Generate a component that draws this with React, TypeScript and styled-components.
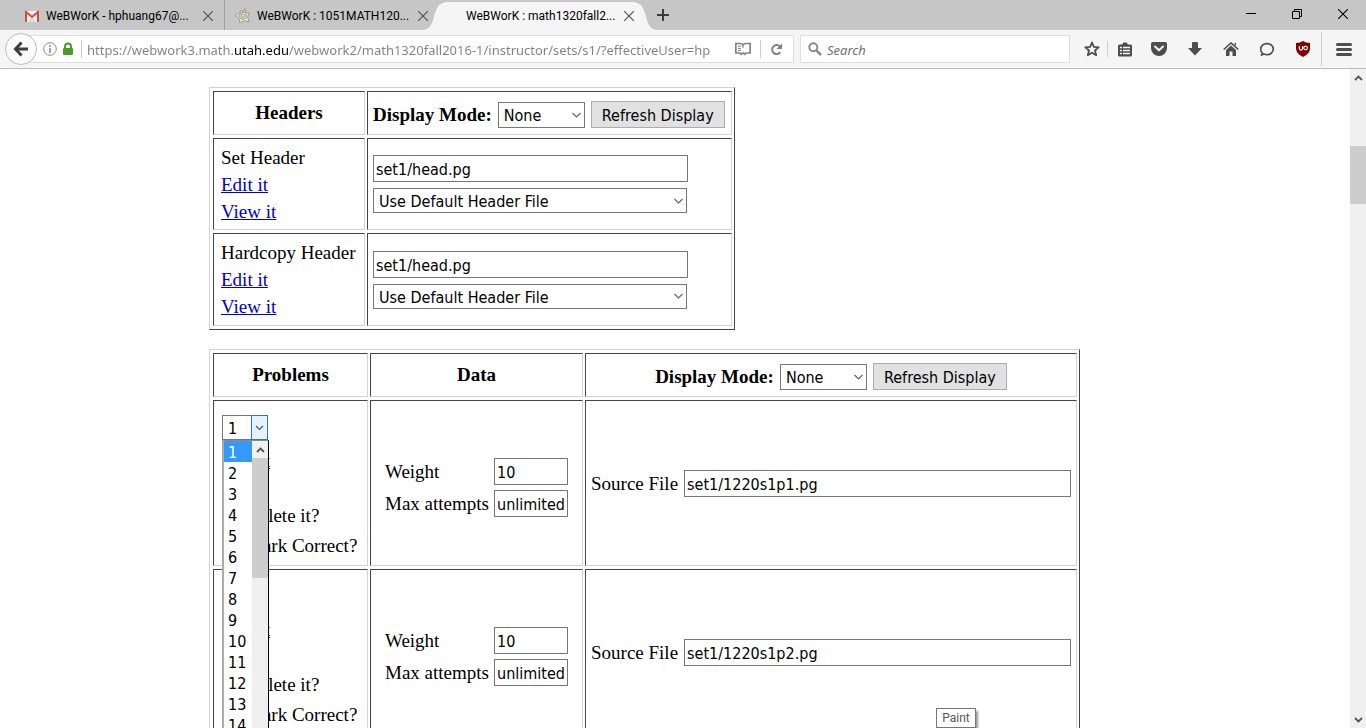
import React from "react";
import styled, { createGlobalStyle } from "styled-components";

const ui = `"Noto Sans", "Open Sans", sans-serif`;
const tabFont = `Roboto, "Open Sans", sans-serif`;
const control = `"DejaVu Sans Condensed", "DejaVu Sans", sans-serif`;
const serif = `"Liberation Serif", "Times New Roman", serif`;

const GlobalStyle = createGlobalStyle`
  *, *::before, *::after { box-sizing: border-box; }
  body { margin: 0; background: #fff; overflow: hidden; }
  svg { display: block; flex: none; }
`;

const Browser = styled.div`
  display: flex;
  flex-direction: column;
  height: 100vh;
  color: #000;
`;

/* ---------- window chrome ---------- */

const TitleBar = styled.header`
  display: flex;
  flex: none;
  height: 30px;
  padding-left: 12px;
  background: #c6c6c6;
  font: 12px/28px ${tabFont};
`;

const Tab = styled.div<{ $active?: boolean }>`
  position: relative;
  display: flex;
  align-items: center;
  gap: 6px;
  width: ${(p) => (p.$active ? 212 : 213)}px;
  padding: 2px ${(p) => (p.$active ? 10 : 8)}px 0 12px;
  border-right: ${(p) => (p.$active ? "0" : "1px solid #9f9f9f")};
  &:nth-of-type(2) { width: 209px; padding-left: 9px; border-right: 0; }
`;

const TabShape = styled.svg`
  position: absolute;
  left: -11px;
  top: 0;
`;

const TabTitle = styled.span`
  position: relative;
  flex: 1;
  white-space: nowrap;
`;

const IconButton = styled.button<{ $w?: number }>`
  position: relative;
  display: flex;
  flex: none;
  align-items: center;
  justify-content: center;
  width: ${(p) => p.$w ?? 36}px;
  height: 100%;
  padding: 0;
  border: 0;
  background: none;
  color: #4d4d4d;
`;

const WindowButtons = styled.div`
  display: flex;
  height: 28px;
  margin-left: auto;
`;

const Toolbar = styled.nav`
  display: flex;
  flex: none;
  align-items: center;
  height: 39px;
  padding-left: 5px;
  background: #f5f5f5;
  border-bottom: 1px solid #bcbcbc;
`;

const BackButton = styled.button`
  z-index: 1;
  display: flex;
  flex: none;
  align-items: center;
  justify-content: center;
  width: 32px;
  height: 32px;
  padding: 0;
  border: 1px solid #bdbdbd;
  border-radius: 50%;
  background: #fbfbfb;
`;

const Field = styled.div`
  display: flex;
  align-items: center;
  min-width: 0;
  height: 28px;
  border: 1px solid #dfdfdf;
  background: #fff;
`;

const UrlField = styled(Field)`
  flex: 773 1 773px;
  margin-left: -16px;
  padding: 0 7px 0 21px;
  gap: 5px;
`;

const Identity = styled.div`
  display: flex;
  align-items: center;
  gap: 5px;
  padding-right: 2px;
`;

const SearchField = styled(Field)`
  flex: 270 1 270px;
  margin: 0 6px;
  padding-left: 7px;
  gap: 5px;
`;

const Divider = styled.span<{ $h: number }>`
  flex: none;
  width: 1px;
  height: ${(p) => p.$h}px;
  background: #cdcdcd;
`;

const UrlInput = styled.input`
  flex: 1;
  min-width: 0;
  height: 26px;
  margin-right: 15px;
  padding: 2px 0 0;
  border: 0;
  outline: 0;
  font: 13px ${ui};
  color: transparent;
  background: linear-gradient(90deg, #808080 147px, #000 147px, #000 202px, #808080 202px);
  background-clip: text;
  -webkit-background-clip: text;
`;

const SearchInput = styled.input`
  flex: 1;
  min-width: 0;
  padding: 2px 0 0;
  border: 0;
  outline: 0;
  background: none;
  font: italic 13px ${ui};
  &::placeholder { color: #707070; opacity: 1; }
`;

/* ---------- page ---------- */

const Viewport = styled.div`
  position: relative;
  display: flex;
  flex: 1;
  min-height: 0;
  overflow: hidden;
`;

const Page = styled.main`
  flex: 1;
  min-width: 0;
  overflow: hidden;
  padding: 18px 0 0 209px;
  font: 19px/27px ${serif};
`;

const GridTable = styled.table`
  margin-bottom: 19px;
  padding-left: 1px;
  border: 1px solid;
  border-color: #d3d3d3 #454545 #454545 #d3d3d3;
  border-collapse: separate;
  border-spacing: 2px 3px;
  table-layout: fixed;
  color: #000;
  font: 19px/27px ${serif};
`;

const HeadersTable = styled(GridTable)`
  width: 526px;
`;

const ProblemsTable = styled(GridTable)`
  width: 871px;
`;

const cellBorder = `
  border: 1px solid;
  border-color: #454545 #d3d3d3 #d3d3d3 #454545;
`;

const HeadCell = styled.th<{ $w: number }>`
  ${cellBorder}
  width: ${(p) => p.$w}px;
  height: 44px;
  padding: 0 0 2px;
  font-weight: bold;
`;

const Cell = styled.td<{ $h?: number }>`
  ${cellBorder}
  height: ${(p) => (p.$h ? `${p.$h}px` : "auto")};
  padding: 0 5px;
`;

const LabelCell = styled(Cell)`
  padding: 0 0 0 7px;
`;

const ProblemCell = styled(Cell)`
  padding: 14px 0 5px 8px;
  vertical-align: top;
`;

const Stack = styled.div<{ $gap?: number }>`
  display: flex;
  flex-direction: column;
  align-items: flex-start;
  gap: ${(p) => p.$gap ?? 0}px;
`;

const DisplayForm = styled.div<{ $center?: boolean }>`
  display: flex;
  align-items: center;
  justify-content: ${(p) => (p.$center ? "center" : "flex-start")};
  gap: 6px;
  padding: 5px 5px 0;
  white-space: nowrap;
`;

const Link = styled.a`
  color: #0000c8;
`;

const ProblemLink = styled(Link)`
  line-height: 26px;
`;

const TextInput = styled.input<{ $w: number }>`
  width: ${(p) => p.$w}px;
  height: 27px;
  padding: 2px 2px 0;
  border: 1px solid #777;
  background: #fff;
  color: #000;
  font: 16px ${control};
`;

const SelectWrap = styled.span<{ $w: number }>`
  position: relative;
  display: inline-flex;
  align-items: center;
  width: ${(p) => p.$w}px;
`;

const SelectBox = styled.select<{ $h?: number }>`
  width: 100%;
  height: ${(p) => p.$h ?? 25}px;
  padding: 2px 5px 0;
  border: 1px solid #777;
  border-radius: 0;
  appearance: none;
  background: #fff;
  color: #000;
  font: 16px ${control};
`;

const Arrow = styled.svg<{ $right?: number }>`
  position: absolute;
  right: ${(p) => p.$right ?? 4}px;
  pointer-events: none;
`;

const ArrowBox = styled.span`
  position: absolute;
  right: 0;
  display: flex;
  align-items: center;
  justify-content: center;
  width: 17px;
  height: 25px;
  border: 1px solid #2a7ab0;
  background: #e5f1fb;
  pointer-events: none;
`;

const RefreshButton = styled.button`
  width: 134px;
  height: 27px;
  padding: 1px 0 0;
  border: 1px solid #adadad;
  background: #e1e1e1;
  color: #000;
  font: 16px ${control};
`;

const Popup = styled.div`
  position: absolute;
  z-index: 2;
  top: 25px;
  left: 0;
  display: flex;
  width: 47px;
  height: 640px;
  border: solid;
  border-width: 1px 1px 1px 2px;
  border-color: #8a8a8a #000 #000 #aaa;
  background: #fff;
`;

const Options = styled.ul`
  flex: 1;
  margin: 0;
  padding: 0;
  list-style: none;
  font: 16px/19px ${control};
`;

const Option = styled.li<{ $on: boolean }>`
  padding: 2px 0 0 4px;
  background: ${(p) => (p.$on ? "#3399ff" : "#fff")};
  color: ${(p) => (p.$on ? "#fff" : "#000")};
`;

const Track = styled.div<{ $w: number }>`
  display: flex;
  flex: none;
  flex-direction: column;
  align-items: center;
  width: ${(p) => p.$w}px;
  background: #f0f0f0;
`;

const Thumb = styled.div<{ $h: number }>`
  flex: none;
  width: 100%;
  height: ${(p) => p.$h}px;
  background: #cdcdcd;
`;

const ArrowSlot = styled.span<{ $h: number }>`
  display: flex;
  flex: none;
  align-items: center;
  height: ${(p) => p.$h}px;
`;

const PageTrack = styled(Track)`
  ${ArrowSlot}:first-child { margin-bottom: 60px; }
  ${ArrowSlot}:last-child { margin-top: auto; }
`;

const Links = styled.div`
  display: flex;
  flex-direction: column;
  align-items: flex-start;
  padding: 8px 0 0 1px;
`;

const CheckLabel = styled.label`
  display: flex;
  align-items: center;
  gap: 6px;
  height: 30px;
  input { width: 13px; height: 13px; margin: 0 0 0 5px; }
`;

const DataGrid = styled.div`
  display: grid;
  grid-template-columns: 104px 74px;
  gap: 5px;
  align-items: center;
  padding: 8px 0 0 9px;
  white-space: nowrap;
`;

const SourceRow = styled.label`
  display: flex;
  align-items: center;
  gap: 6px;
  white-space: nowrap;
`;

const Tooltip = styled.div`
  position: absolute;
  left: 936px;
  bottom: 0;
  width: 40px;
  height: 20px;
  border: 1px solid #767676;
  background: #fff;
  box-shadow: 2px 3px 2px #999;
  color: #575757;
  font: 12px/18px ${tabFont};
  text-align: center;
`;

/* ---------- icons ---------- */

const Cross = ({ size = 10, color = "#4d4d4d" }) => (
  <svg width={size} height={size} viewBox="0 0 10 10" stroke={color} strokeWidth="1.1">
    <path d="M0 0 10 10M10 0 0 10" />
  </svg>
);

const Chevron = ({ up = false, bold = false }) => (
  <svg width="9" height="6" viewBox="0 0 9 6" fill="none" stroke="#555" strokeWidth={bold ? 1.8 : 1.2}>
    <path d={up ? "M1 5 4.5 1.500 8 5" : "M1 1 4.5 4.500 8 1"} />
  </svg>
);

const GmailIcon = () => (
  <svg width="16" height="16" viewBox="0 0 16 16">
    <path d="M1 3h14v11H1z" fill="#f2f2f2" />
    <path d="M3.5 14 8 8.5 12.5 14z" fill="#dcdcdc" />
    <path d="M1 14V3.6Q1 2.6 2 2.6L8 7.8l6-5.2q1 0 1 1V14h-2V6L8 10.2 3 6v8z" fill="#d54b3d" />
  </svg>
);

const WebIcon = () => (
  <svg width="17" height="16" viewBox="0 0 16 16" fill="none" stroke="#96967e" strokeWidth=".9">
    <path d="M10.500.8 11 4.600 15 5 13 9l1.800 5-5-1.500-4.500 2.300-.6-4.300L.8 7.500 5 5.300 6.500 2l2 2z" fill="#e8e6d2" />
    <path d="M9.700 4 12 6.200 11 10.400 7 11.300 4.600 8 6.300 5zM9 6l1.400 1.500L9 9.400 7 9l-.5-2z" />
  </svg>
);

const Back = () => (
  <svg width="16" height="16" viewBox="0 0 16 16" fill="none" stroke="#3f3f3f" strokeWidth="3">
    <path d="M8.5 1.5 2.5 8l6 6.5M3 8h12" />
  </svg>
);

const Info = () => (
  <svg width="14" height="14" viewBox="0 0 14 14" fill="none" stroke="#8a8a8a">
    <circle cx="7" cy="7" r="6.3" />
    <path d="M7 6v5M7 3v2" strokeWidth="1.6" />
  </svg>
);

const Lock = () => (
  <svg width="12" height="14" viewBox="0 0 12 14">
    <path d="M3 7V4.5a3 3 0 0 1 6 0V7" fill="none" stroke="#4d9a26" strokeWidth="2" />
    <rect x="1" y="6" width="10" height="7" rx="1" fill="#4d9a26" />
  </svg>
);

const Reader = () => (
  <svg width="16" height="14" viewBox="0 0 16 14" fill="none" stroke="#808080" strokeWidth="1.700">
    <path d="M8 3Q6.800 1.500 5.500 1.500H.8v9.500h4.200Q5.500 11 6 12.300L8 11l2 1.300Q10.500 11 11 11h4.200V1.500h-4.700Q9.200 1.500 8 3z" />
    <path d="M3 4.200h3M3 6.400h3M3 8.600h3M8 3v3" strokeWidth="1" />
  </svg>
);

const Reload = () => (
  <svg width="13" height="13" viewBox="0 0 13 13">
    <path d="M10.300 9.200A4.500 4.500 0 1 1 9.800 3.400" fill="none" stroke="#808080" strokeWidth="2" />
    <path d="M12 .5V6H6.500z" fill="#808080" />
  </svg>
);

const Magnifier = () => (
  <svg width="14" height="14" viewBox="0 0 14 14" fill="none" stroke="#8c8c8c">
    <circle cx="5.300" cy="5.300" r="4" strokeWidth="2" />
    <path d="M8.300 8.300 13 13" strokeWidth="2.600" />
  </svg>
);

const Star = () => (
  <svg width="16" height="16" viewBox="0 0 16 16" fill="none" stroke="#4d4d4d" strokeWidth="1.800" strokeLinejoin="round">
    <path d="M8 1.500 9.900 5.900l4.800.4-3.700 3.200 1.200 4.800L8 11.700l-4.200 2.600L5 9.500 1.300 6.300l4.800-.4z" />
  </svg>
);

const ListIcon = () => (
  <svg width="14" height="15" viewBox="0 0 14 15">
    <path d="M1.500 2.500H4L5.500.5h3l1.500 2h2.500q1.500 0 1.500 1.500v9q0 1.500-1.500 1.500h-11Q0 14.500 0 13V4q0-1.500 1.500-1.500z" fill="#4d4d4d" />
    <path d="M2 5.500h2M5 5.500h7M2 8.500h2M5 8.500h7M2 11.500h2M5 11.500h7" stroke="#f5f5f5" strokeWidth="1.600" />
  </svg>
);

const Pocket = () => (
  <svg width="16" height="14" viewBox="0 0 16 14">
    <path d="M1.500 0h13Q16 0 16 1.500V6A8 8 0 0 1 0 6V1.500Q0 0 1.500 0z" fill="#4d4d4d" />
    <path d="M4 4.500 8 8.300l4-3.800" fill="none" stroke="#f5f5f5" strokeWidth="2" strokeLinecap="round" strokeLinejoin="round" />
  </svg>
);

const Download = () => (
  <svg width="14" height="14" viewBox="0 0 14 14" fill="#4d4d4d">
    <path d="M5 0h4q1 0 1 1v5h4L7 13.500 0 6h4V1q0-1 1-1z" />
  </svg>
);

const Home = () => (
  <svg width="16" height="14" viewBox="0 0 16 14">
    <path d="M.7 7.500 8 1l7.300 6.500" fill="none" stroke="#4d4d4d" strokeWidth="1.600" />
    <path d="M11.500 1H13v3l-1.500-1.300zM8 3.500l5 4.500v6H9.500V9.500h-3V14H3V8z" fill="#4d4d4d" />
  </svg>
);

const Chat = () => (
  <svg width="16" height="15" viewBox="0 0 16 15" fill="none" stroke="#4d4d4d" strokeWidth="1.600">
    <path d="M1.800 13.200c1-.3 1.500-.9 1.600-1.900C2.300 10.200 1.700 8.800 1.700 7.200 1.700 4 4.500 1.600 8 1.600s6.300 2.400 6.300 5.500-2.800 5.600-6.300 5.600c-1.200 0-2.200-.3-3.100-.7-.8.7-1.800 1.200-3.100 1.200z" />
  </svg>
);

const Shield = () => (
  <svg width="14" height="16" viewBox="0 0 14 16">
    <path d="M7 0q3 2 7 2v5.500q0 5-7 8.500-7-3.500-7-8.500V2q4 0 7-2z" fill="#800000" />
    <path d="M3.300 5v2.500a1.600 1.600 0 0 0 3.200 0V5M9 5.300a1.800 1.800 0 1 1 0 3.400 1.800 1.800 0 0 1 0-3.400z" fill="none" stroke="#fff" strokeWidth="1.100" />
  </svg>
);

const Menu = () => (
  <svg width="16" height="13" viewBox="0 0 16 13" stroke="#4d4d4d" strokeWidth="3" strokeLinecap="round">
    <path d="M1.500 1.500h13M1.500 6.500h13M1.500 11.500h13" />
  </svg>
);

/* ---------- parts ---------- */

const Select = ({ label, value, width, height }: { label: string; value: string; width: number; height?: number }) => (
  <SelectWrap $w={width}>
    <SelectBox aria-label={label} $h={height} defaultValue={value}>
      <option>{value}</option>
    </SelectBox>
    <Arrow width="9" height="6" viewBox="0 0 9 6" fill="none" stroke="#666" strokeWidth="1.200">
      <path d="M.5 1 4.500 5 8.500 1" />
    </Arrow>
  </SelectWrap>
);

const DisplayMode = ({ center }: { center?: boolean }) => (
  <DisplayForm $center={center}>
    <span>Display Mode:</span>
    <Select label="Display Mode" value="None" width={87} height={26} />
    <RefreshButton type="button">Refresh Display</RefreshButton>
  </DisplayForm>
);

const HeaderRow = ({ name, height }: { name: string; height: number }) => (
  <tr>
    <LabelCell $h={height}>
      <Stack>
        <span>{name}</span>
        <Link href="#edit">Edit it</Link>
        <Link href="#view">View it</Link>
      </Stack>
    </LabelCell>
    <Cell>
      <Stack $gap={6}>
        <TextInput aria-label={`${name} file`} $w={315} defaultValue="set1/head.pg" />
        <Select label={`${name} choice`} value="Use Default Header File" width={314} />
      </Stack>
    </Cell>
  </tr>
);

const numbers = Array.from({ length: 14 }, (_, i) => i + 1);

const NumberPopup = () => (
  <Popup>
    <Options role="listbox" aria-label="Problem number">
      {numbers.map((n) => (
        <Option key={n} role="option" aria-selected={n === 1} $on={n === 1}>
          {n}
        </Option>
      ))}
    </Options>
    <Track $w={16}>
      <ArrowSlot $h={17}>
        <Chevron up bold />
      </ArrowSlot>
      <Thumb $h={120} />
    </Track>
  </Popup>
);

const ProblemRow = ({ n, open }: { n: number; open?: boolean }) => (
  <tr>
    <ProblemCell>
      <Stack>
        <SelectWrap $w={46}>
          <SelectBox aria-label={`Problem ${n} number`} defaultValue={n}>
            <option>{n}</option>
          </SelectBox>
          <ArrowBox>
            <Chevron />
          </ArrowBox>
          {open && <NumberPopup />}
        </SelectWrap>
        <Links>
          <ProblemLink href="#edit">Edit it</ProblemLink>
          <ProblemLink href="#try">Try it</ProblemLink>
        </Links>
        <CheckLabel>
          <input type="checkbox" />
          Delete it?
        </CheckLabel>
        <CheckLabel>
          <input type="checkbox" />
          Mark Correct?
        </CheckLabel>
      </Stack>
    </ProblemCell>
    <Cell>
      <DataGrid>
        <label htmlFor={`weight${n}`}>Weight</label>
        <TextInput id={`weight${n}`} $w={74} defaultValue="10" />
        <label htmlFor={`attempts${n}`}>Max attempts</label>
        <TextInput id={`attempts${n}`} $w={74} defaultValue="unlimited" />
      </DataGrid>
    </Cell>
    <Cell>
      <SourceRow>
        Source File
        <TextInput $w={387} defaultValue={`set1/1220s1p${n}.pg`} />
      </SourceRow>
    </Cell>
  </tr>
);

export default function App() {
  return (
    <Browser>
      <GlobalStyle />
      <TitleBar>
        <Tab>
          <GmailIcon />
          <TabTitle>WeBWorK - hphuang67@...</TabTitle>
          <IconButton $w={16} aria-label="Close tab"><Cross /></IconButton>
        </Tab>
        <Tab>
          <WebIcon />
          <TabTitle>WeBWorK : 1051MATH120...</TabTitle>
          <IconButton $w={16} aria-label="Close tab"><Cross /></IconButton>
        </Tab>
        <Tab $active>
          <TabShape width="234" height="30" viewBox="0 0 234 30">
            <path d="M0 30C9 29 10 20 12 13Q15 2 24 2H210Q219 2 222 13C224 20 225 29 234 30z" fill="#f5f5f5" />
          </TabShape>
          <svg width="14" height="16" />
          <TabTitle>WeBWorK : math1320fall2...</TabTitle>
          <IconButton $w={16} aria-label="Close tab"><Cross /></IconButton>
        </Tab>
        <IconButton $w={34} aria-label="New tab">
          <svg width="12" height="12" viewBox="0 0 12 12" stroke="#3c3c3c" strokeWidth="2">
            <path d="M6 0v12M0 6h12" />
          </svg>
        </IconButton>
        <WindowButtons>
          <IconButton $w={46} aria-label="Minimize">
            <svg width="10" height="10" viewBox="0 0 10 10" stroke="#000"><path d="M0 4.500h10" /></svg>
          </IconButton>
          <IconButton $w={46} aria-label="Restore">
            <svg width="10" height="10" viewBox="0 0 10 10" fill="none" stroke="#000">
              <path d="M.5 2.500h7v7h-7zM2.500 2.500v-2h7v7h-2" />
            </svg>
          </IconButton>
          <IconButton $w={46} aria-label="Close"><Cross color="#000" /></IconButton>
        </WindowButtons>
      </TitleBar>

      <Toolbar>
        <BackButton aria-label="Back"><Back /></BackButton>
        <UrlField>
          <Identity>
            <Info />
            <Lock />
          </Identity>
          <Divider $h={18} />
          <UrlInput
            aria-label="Address"
            defaultValue="https://webwork3.math.utah.edu/webwork2/math1320fall2016-1/instructor/sets/s1/?effectiveUser=hp"
          />
          <IconButton $w={24} aria-label="Reader view"><Reader /></IconButton>
          <Divider $h={18} />
          <IconButton $w={20} aria-label="Reload"><Reload /></IconButton>
        </UrlField>
        <SearchField>
          <Magnifier />
          <SearchInput aria-label="Search" placeholder="Search" />
        </SearchField>
        <IconButton $w={31} aria-label="Bookmark"><Star /></IconButton>
        <Divider $h={16} />
        <IconButton $w={33} aria-label="Bookmarks list"><ListIcon /></IconButton>
        <IconButton aria-label="Pocket"><Pocket /></IconButton>
        <IconButton aria-label="Downloads"><Download /></IconButton>
        <IconButton aria-label="Home"><Home /></IconButton>
        <IconButton aria-label="Chat"><Chat /></IconButton>
        <IconButton aria-label="Content blocker"><Shield /></IconButton>
        <Divider $h={34} />
        <IconButton $w={44} aria-label="Menu"><Menu /></IconButton>
      </Toolbar>

      <Viewport>
        <Page>
          <HeadersTable>
            <thead>
              <tr>
                <HeadCell $w={152}>Headers</HeadCell>
                <HeadCell $w={365}><DisplayMode /></HeadCell>
              </tr>
            </thead>
            <tbody>
              <HeaderRow name="Set Header" height={92} />
              <HeaderRow name="Hardcopy Header" height={93} />
            </tbody>
          </HeadersTable>
          <ProblemsTable>
            <thead>
              <tr>
                <HeadCell $w={155}>Problems</HeadCell>
                <HeadCell $w={213}>Data</HeadCell>
                <HeadCell $w={492}><DisplayMode center /></HeadCell>
              </tr>
            </thead>
            <tbody>
              <ProblemRow n={1} open />
              <ProblemRow n={2} />
            </tbody>
          </ProblemsTable>
        </Page>
        <PageTrack $w={16}>
          <ArrowSlot $h={17}><Chevron up bold /></ArrowSlot>
          <Thumb $h={58} />
          <ArrowSlot $h={17}><Chevron bold /></ArrowSlot>
        </PageTrack>
        <Tooltip role="tooltip">Paint</Tooltip>
      </Viewport>
    </Browser>
  );
}
